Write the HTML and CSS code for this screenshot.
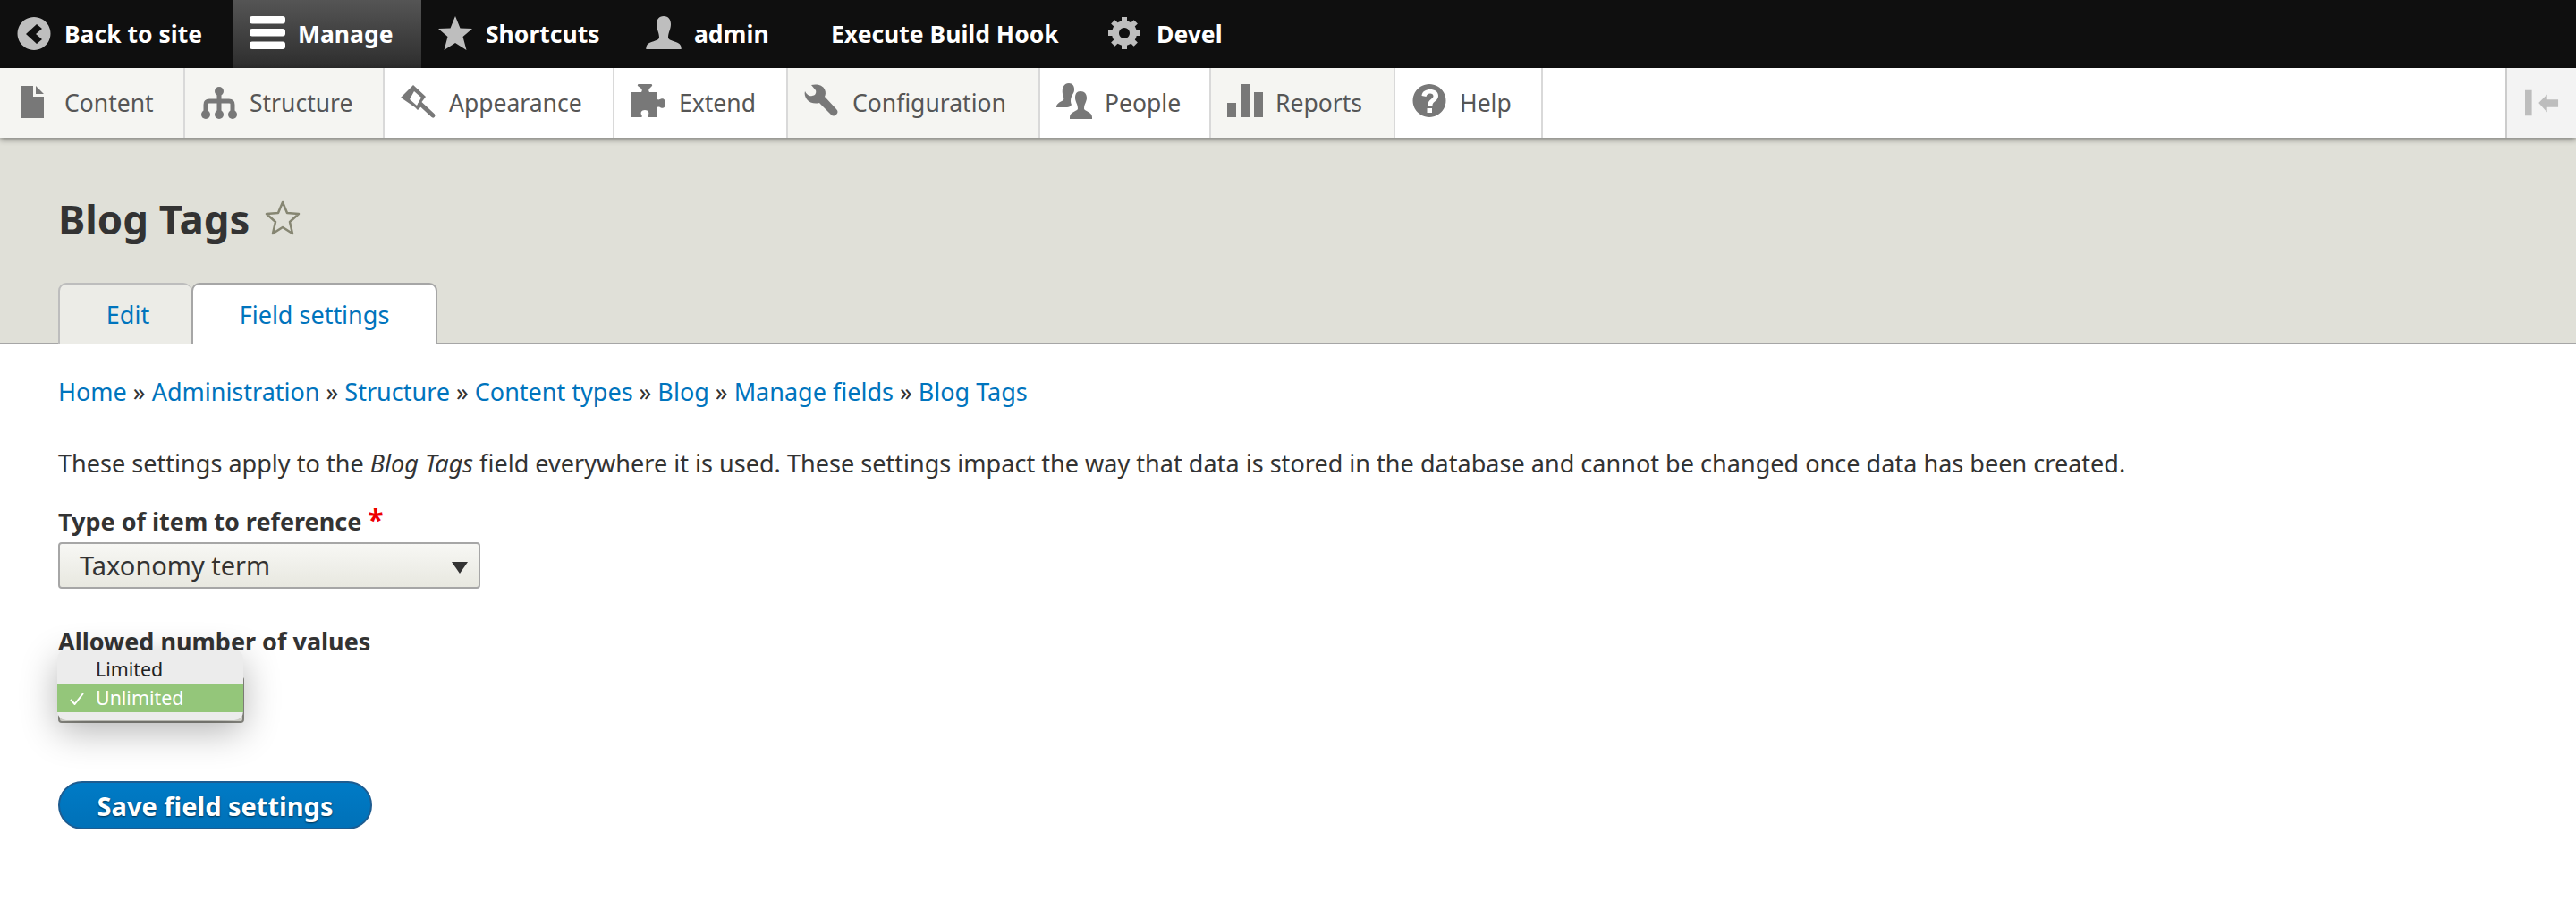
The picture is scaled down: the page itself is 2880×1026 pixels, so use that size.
FILE: index.html
```html
<!DOCTYPE html>
<html lang="en">
<head>
  <meta charset="UTF-8" />
  <title>Blog Tags</title>
  <link rel="stylesheet" href="styles.css">
</head>
<body>
  <div class="toolbar-bar">
    <a class="bar-item">
      <svg class="icon" viewBox="0 0 40 40"><path fill-rule="evenodd" d="M20 1a18.500 18.500 0 1 0 .01 0zM23 9l6 5-7 6 7 6-6 5-12-11z"/></svg>
      Back to site
    </a>
    <a class="bar-item bar-active">
      <svg class="icon icon-white" viewBox="0 0 40 40"><rect x="0" y="0" width="40" height="8.500" rx="3"/><rect x="0" y="14" width="40" height="8.500" rx="3"/><rect x="0" y="28.500" width="40" height="8.500" rx="3"/></svg>
      Manage
    </a>
    <a class="bar-item">
      <svg class="icon" viewBox="0 0 40 40"><path d="M20 0l5.500 13.500 13.500.5-10.500 9 4 15-12.500-8-12.500 8 4-15-10.500-9 13.500-.5z"/></svg>
      Shortcuts
    </a>
    <a class="bar-item">
      <svg class="icon" viewBox="0 0 40 40"><path d="M20 0c5.500 0 8 4 8 9 0 6-3 9-3 15 0 4 12 4 14 9 .7 2 .7 3 .7 4H.3c0-1 0-2 .7-4 2-5 14-5 14-9 0-6-3-9-3-15 0-5 2.500-9 8-9z"/></svg>
      admin
    </a>
    <a class="bar-item bar-plain">Execute Build Hook</a>
    <a class="bar-item">
      <svg class="icon" viewBox="0 0 40 40">
        <path fill-rule="evenodd" d="M18 5a14 14 0 1 0 .01 0zM18 13a6 6 0 1 1-.01 0z"/>
        <rect x="15" y="1" width="6" height="8"/>
        <rect x="15" y="29" width="6" height="8"/>
        <rect x="0" y="16" width="8" height="6"/>
        <rect x="28" y="16" width="8" height="6"/>
        <rect x="15" y="1" width="6" height="8" transform="rotate(45 18 19)"/>
        <rect x="15" y="1" width="6" height="8" transform="rotate(135 18 19)"/>
        <rect x="15" y="1" width="6" height="8" transform="rotate(225 18 19)"/>
        <rect x="15" y="1" width="6" height="8" transform="rotate(315 18 19)"/>
      </svg>
      Devel
    </a>
  </div>

  <div class="toolbar-tray">
    <a class="tray-item">
      <svg class="icon" viewBox="0 0 40 40"><path d="M5 3h14v12h12v24H5zM22 3l9 9h-9z"/></svg>
      Content
    </a>
    <a class="tray-item">
      <svg class="icon" viewBox="0 0 40 40">
        <circle cx="20" cy="9" r="5"/><circle cx="5" cy="35" r="5"/><circle cx="20" cy="35" r="5"/><circle cx="35" cy="35" r="5"/>
        <path class="icon-line" d="M20 9v26M5 35V24c0-3 1-4 4-4h22c3 0 4 1 4 4v11"/>
      </svg>
      Structure
    </a>
    <a class="tray-item">
      <svg class="icon" viewBox="0 0 40 40">
        <path fill-rule="evenodd" d="M14 2l14 13-6 8 2 2-5 5-3-3-16-11zM15 9l-5 9 8 7 5-9z"/>
        <path class="icon-line" d="M22 23l14 13"/>
      </svg>
      Appearance
    </a>
    <a class="tray-item">
      <svg class="icon" viewBox="0 0 40 40"><path d="M9 1h14c1 0 1.500 1 1 2l-3 3c-1 1-1 3 0 4h9v8c1 1 3 0 4-.5 2-1 5 0 5 5s-3 6-5 5c-1-.5-3-1.500-4-.5v11H20c-1 0-1-2 0-3 1-2 0-5-4-5s-5 3-4 5c1 1 1 3 0 3H1V10h11c1-1 1-3 0-4L8 3c-.5-1 0-2 1-2z"/></svg>
      Extend
    </a>
    <a class="tray-item">
      <svg class="icon" viewBox="0 0 40 40"><path d="M8 2c6-1.500 13 0 15 5 1.500 3 1 6 0 8l13 14c2 2 2 4 0 6s-4 2-6 0L17 22c-5 1.500-11 0-14-4C1 15 0 12 1 9c2 4 5 6 8 5 3 0 5-3 4-6z"/></svg>
      Configuration
    </a>
    <a class="tray-item">
      <svg class="icon" viewBox="0 0 40 40"><path d="M14 0c4 0 6 3 6 7 0 2-.5 3.500-1.500 5-1.500 2-2.500 5-2.500 8 0 1.500.5 3 1 4-1 2-3 3-5 3H0c0-4 4-6 8-8 1-2-.5-5-1-7C6 6 8 0 14 0z"/><path d="M27 9c4.500 0 7 3 7 7.500 0 4-3 7-3 12 0 3 9 3 9 9.500v2H15v-2c0-6.500 9-6.500 9-9.500 0-5-3-8-3-12C21 12 22.500 9 27 9z"/></svg>
      People
    </a>
    <a class="tray-item">
      <svg class="icon" viewBox="0 0 40 40"><path d="M0 22h10v16H0zM15 1h10v37H15zM30 10h10v28H30z"/></svg>
      Reports
    </a>
    <a class="tray-item">
      <svg class="icon" viewBox="0 0 40 40"><path fill-rule="evenodd" d="M20 1a18.500 18.500 0 1 0 .01 0zM21 7c-5 0-9 2-9.500 7l5 1c.5-2 2-3.500 4.500-3.500 2 0 3.500 1 3.500 3 0 3-6 4-6 9.500v1.500h5v-1c0-4 6.500-4.500 6.500-10.500C30 9.500 26 7 21 7zM17.500 28v5h5.500v-5z"/></svg>
      Help
    </a>
    <a class="tray-toggle">
      <svg class="toggle-icon" viewBox="0 0 40 30"><path d="M0 0h8v30H0zM16 15l10-10v6h13v9H26v6z"/></svg>
    </a>
  </div>

  <header class="page-head">
    <h1 class="page-title">
      Blog Tags
      <svg class="title-star" viewBox="0 0 40 40"><path d="M20 3l5 12 13 1-10 9 3 13-11-7-11 7 3-13-10-9 13-1z"/></svg>
    </h1>
    <nav class="tabs">
      <a class="tab tab-edit">Edit</a>
      <a class="tab tab-active">Field settings</a>
    </nav>
  </header>

  <main class="content">
    <div class="breadcrumb">
      <a>Home</a> » <a>Administration</a> » <a>Structure</a> » <a>Content types</a> » <a>Blog</a> » <a>Manage fields</a> » <a>Blog Tags</a>
    </div>
    <p class="intro">These settings apply to the <em>Blog Tags</em> field everywhere it is used. These settings impact the way that data is stored in the database and cannot be changed once data has been created.</p>

    <div class="field field-type">
      <label class="field-label">Type of item to reference <span class="required">*</span></label>
      <div class="select select-type">Taxonomy term<span class="select-arrow"></span></div>
    </div>

    <div class="field field-card">
      <label class="field-label">Allowed number of values</label>
      <div class="select select-card"></div>
      <ul class="popup">
        <li class="popup-row">Limited</li>
        <li class="popup-row popup-selected">
          <svg class="popup-check" viewBox="0 0 16 14"><path d="M1 8l4.500 5L15 1"/></svg>
          Unlimited
        </li>
      </ul>
    </div>

    <button class="save-btn">Save field settings</button>
  </main>
</body>
</html>
```

FILE: styles.css
```css
* {
  box-sizing: border-box;
}

body {
  margin: 0;
  font-family: "Noto Sans", "DejaVu Sans", sans-serif;
  font-size: 27px;
  color: #333;
  background: #fff;
  overflow-x: hidden;
}

.icon {
  width: 40px;
  height: 40px;
  flex: none;
  fill: #bebebe;
}

.icon-white {
  fill: #fff;
}

.icon-line {
  fill: none;
  stroke: #787878;
  stroke-width: 5;
  stroke-linecap: round;
}

/* top black bar */
.toolbar-bar {
  display: grid;
  grid-template-columns: 261px 210px 233px 190px 327px 1fr;
  height: 76px;
  background: #0f0f0f;
  color: #fff;
  font-size: 26.500px;
  font-weight: 700;
}

.bar-item {
  display: flex;
  align-items: center;
  gap: 14px;
  padding-left: 18px;
}

.bar-plain {
  padding-left: 35px;
}

.bar-active {
  background: linear-gradient(to bottom, #555, #2d2d2d);
}

/* menu tray */
.toolbar-tray {
  display: grid;
  grid-template-columns: 207px 223px 257px 194px 282px 191px 206px 165px 1fr 79px;
  height: 78px;
  background: #fff;
  color: #565656;
  font-size: 26.500px;
  box-shadow: 0 2px 6px rgba(0, 0, 0, 0.45);
  position: relative;
}

.tray-item {
  display: flex;
  align-items: center;
  gap: 14px;
  padding-left: 18px;
  background: #f5f5f2;
  border-right: 2px solid #d9d9d9;
}

.tray-item .icon {
  fill: #787878;
  margin-top: -4px;
}

.tray-item:nth-child(3),
.tray-item:nth-child(4),
.tray-item:nth-child(6),
.tray-item:nth-child(8) {
  background: #fff;
}

.tray-toggle {
  grid-column: 10;
  display: flex;
  align-items: center;
  justify-content: center;
  background: #f3f3f3;
  border-left: 2px solid #ccc;
}

.toggle-icon {
  width: 38px;
  height: 30px;
  fill: #bdbdbd;
}

/* page header */
.page-head {
  height: 231px;
  padding: 0 65px;
  background: #e0e0d8;
  border-bottom: 2px solid #a6a6a6;
  display: flex;
  flex-direction: column;
  justify-content: space-between;
}

.page-title {
  display: flex;
  align-items: center;
  gap: 17px;
  margin: 62px 0 0;
  font-size: 45.500px;
  line-height: 56px;
  font-weight: 700;
  color: #333;
}

.title-star {
  width: 40px;
  height: 40px;
  margin-top: -2px;
  fill: none;
  stroke: #868672;
  stroke-width: 2.500;
  stroke-linejoin: round;
}

.tabs {
  display: flex;
  margin-bottom: -2px;
}

.tab {
  height: 69px;
  display: flex;
  align-items: center;
  justify-content: center;
  color: #0074bd;
  border-radius: 9px 9px 0 0;
}

.tab-edit {
  width: 149px;
  padding-left: 5px;
  background: #ecece7;
  border: 2px solid #bdbdbd;
  border-bottom: none;
  border-right: none;
}

.tab-active {
  width: 275px;
  background: #fff;
  border: 2px solid #a6a6a6;
  border-bottom: none;
}

/* main content */
.content {
  padding: 0 65px;
}

.breadcrumb {
  margin-top: 35px;
  line-height: 36px;
}

.breadcrumb a {
  color: #0074bd;
}

.intro {
  margin: 44px 0 0;
  line-height: 36px;
  letter-spacing: 0.030px;
}

.field {
  position: relative;
}

.field-type {
  margin-top: 29px;
}

.field-card {
  margin-top: 41px;
}

.field-label {
  display: block;
  font-weight: 700;
  line-height: 36px;
}

.required {
  color: #e00;
  font-size: 32px;
  line-height: 0;
}

.select {
  position: relative;
  height: 52px;
  margin-top: 5px;
  background: linear-gradient(to bottom, #f7f7f4, #e8e8e0);
  border: 2px solid #a6a6a6;
  border-radius: 4px;
}

.select-type {
  width: 472px;
  padding-left: 22px;
  line-height: 48px;
  font-size: 29px;
}

.select-arrow {
  position: absolute;
  right: 12px;
  top: 20px;
  border-left: 9px solid transparent;
  border-right: 9px solid transparent;
  border-top: 13px solid #333;
}

.select-card {
  width: 208px;
  margin-top: 21px;
  border-color: #8f8f88;
}

/* native dropdown popup, sits over the select */
.popup {
  position: absolute;
  left: -1px;
  top: 27px;
  width: 208px;
  height: 79px;
  margin: 0;
  padding: 8px 0 0;
  list-style: none;
  background: #ececec;
  border-radius: 10px;
  box-shadow: 0 12px 40px rgba(0, 0, 0, 0.3);
  font-size: 21.400px;
  color: #222;
}

.popup-row {
  position: relative;
  height: 30px;
  line-height: 28px;
  padding-left: 43px;
}

.popup-selected {
  height: 32px;
  line-height: 32px;
  background: #94c67a;
  color: #fff;
}

.popup-check {
  position: absolute;
  left: 14px;
  top: 10px;
  width: 16px;
  height: 14px;
  fill: none;
  stroke: #fff;
  stroke-width: 2;
}

.save-btn {
  display: block;
  width: 351px;
  height: 54px;
  margin-top: 65px;
  padding: 0;
  font: inherit;
  font-weight: 700;
  font-size: 29px;
  color: #fff;
  text-shadow: 0 1px 2px rgba(0, 0, 0, 0.6);
  background: linear-gradient(to bottom, #007bc6, #0071b8);
  border: 2px solid #1e5c90;
  border-radius: 27px;
}
```
